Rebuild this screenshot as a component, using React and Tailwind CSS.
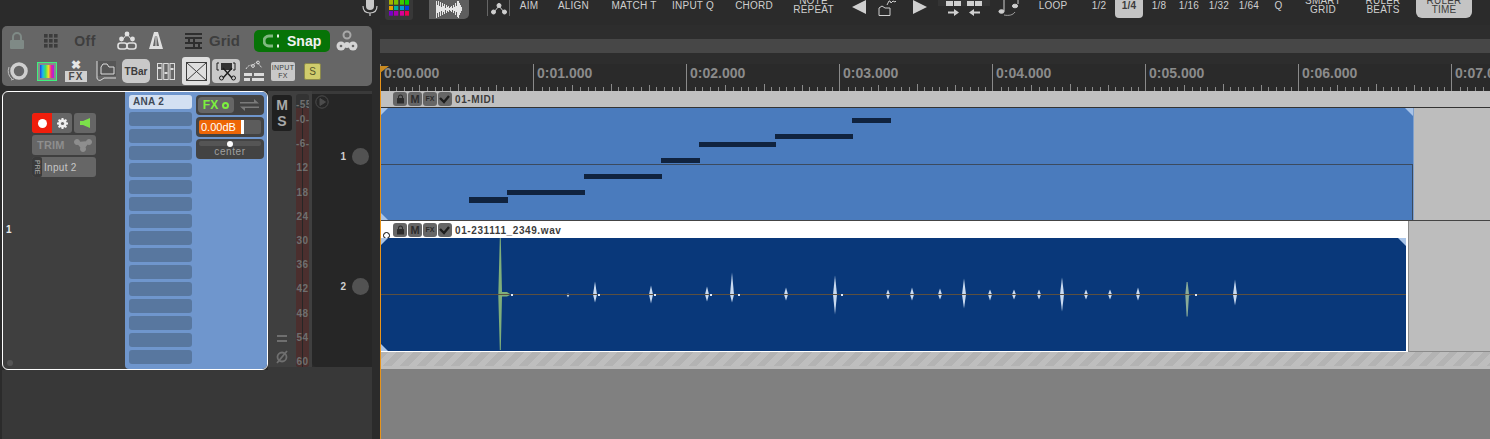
import React from "react";

const FONT = "font-['Liberation_Sans',Arial,sans-serif]";

// TOP TOOLBAR
function MicIcon() {
  return (
    <svg width="20" height="16" viewBox="0 0 20 16" fill="none">
      <rect x="6" y="-6" width="8" height="16" rx="4" fill="#c8c8c8" />
      <path d="M3 6c0 5 3 7 7 7s7-2 7-7M10 13v3" stroke="#c8c8c8" strokeWidth="1.2" />
    </svg>
  );
}

function PadGrid() {
  const colors = [
    "#a8b000", "#78c000", "#40c800", "#08d000",
    "#e8a000", "#00b0a0", "#0098d8", "#0040e0",
    "#7800c8", "#a800b0", "#d80098", "#f00050",
  ];
  return (
    <div className="w-[28px] h-[20px] bg-[#383838] rounded-b-[3px] grid grid-cols-4 gap-px px-[4px] pb-[4px]">
      {colors.map((c, i) => (
        <svg key={i} className="w-full h-full" viewBox="0 0 5 4" preserveAspectRatio="none">
          <rect width="5" height="4" fill={c} />
        </svg>
      ))}
    </div>
  );
}

const waveAmps = [9, 4, 8, 3, 7, 2, 6, 3, 5, 1, 4, 2, 3, 1, 2, 3, 1, 4, 2, 6, 3, 8, 9, 6, 4, 2];

function WaveButton() {
  return (
    <div className="w-[40px] h-[19px] bg-[#5e5e5e] rounded-br-[5px] flex items-center justify-center">
      <svg width="28" height="18" viewBox="0 0 28 18" stroke="#e6e6e6">
        {waveAmps.map((a, i) => (
          <line key={i} x1={i + 1.5} x2={i + 1.5} y1={8 - a} y2={8 + a} />
        ))}
      </svg>
    </div>
  );
}

function NodeIcon() {
  return (
    <div className="w-[23px] h-[16px] border-x border-[#666] flex items-center justify-center">
      <svg width="16" height="13" viewBox="0 0 16 13" fill="#d0d0d0" stroke="#d0d0d0">
        <path d="M3 10l5-6 5 6" fill="none" strokeWidth="1" />
        <circle cx="8" cy="3.5" r="2" />
        <circle cx="2.5" cy="10" r="2" />
        <circle cx="13.5" cy="10" r="2" />
      </svg>
    </div>
  );
}

function Label({ w, children, two, active }) {
  return (
    <div
      className={`shrink-0 text-center text-[10px] tracking-[0.2px] ${w} ${
        two ? "leading-[9px] -mt-[4px]" : "leading-[11px]"
      } ${active ? "text-[#3c3c3c]" : "text-[#cfcfcf]"}`}
    >
      {children}
    </div>
  );
}

function ArrowKeys() {
  return (
    <div className="ml-[16px] shrink-0 flex items-start">
      <svg width="14" height="15" viewBox="0 0 14 15" fill="#cfcfcf">
        <path d="M14 0v14L0 7z" />
      </svg>
      <svg width="24" height="17" viewBox="0 0 24 17" fill="none" stroke="#cfcfcf" className="ml-[12px]">
        <path d="M1 15.5V8l3-2 3 2h5v7.5zM9 5l2-4h1l1 2 2-2 2 1 1-1" strokeWidth="1" />
      </svg>
      <svg width="14" height="15" viewBox="0 0 14 15" fill="#cfcfcf" className="ml-[11px]">
        <path d="M0 0v14l14-7z" />
      </svg>
    </div>
  );
}

function SplitIcons() {
  return (
    <div className="ml-[11px] shrink-0 w-[52px] h-[16px] flex gap-[6px] pl-[8px] bg-[linear-gradient(#343434_0_6px,transparent_6px)]">
      {[
        "M2 11.500h6V9l5 3.500-5 3.500v-2.500H2z",
        "M13 11.500H7V9l-5 3.500 5 3.500v-2.500h6z",
      ].map((d) => (
        <svg key={d} width="15" height="16" viewBox="0 0 15 16" fill="#d0d0d0">
          <rect x="0" y="1" width="7" height="5" />
          <rect x="8" y="1" width="7" height="5" />
          <path d={d} />
        </svg>
      ))}
    </div>
  );
}

function NotesIcon() {
  return (
    <svg width="22" height="16" viewBox="0 0 22 16" fill="none" stroke="#cfcfcf" className="ml-[8px] shrink-0">
      <path d="M6 0v11M20 0v4" strokeWidth="1" />
      <ellipse cx="3.5" cy="11.5" rx="2.6" ry="1.8" fill="#cfcfcf" />
      <ellipse cx="17" cy="6" rx="2.6" ry="1.8" fill="#cfcfcf" />
      <path d="M6 15c5 1 9 0 11-3" strokeWidth=".7" />
    </svg>
  );
}

function TopBar() {
  return (
    <div className="h-[25px] shrink-0 bg-[#2b2b2b] flex items-start pl-[360px] overflow-hidden">
      <div className="w-[25px] shrink-0"><MicIcon /></div>
      <div className="w-[44px] shrink-0"><PadGrid /></div>
      <div className="w-[58px] shrink-0"><WaveButton /></div>
      <div className="w-[23px] shrink-0"><NodeIcon /></div>
      <Label w="w-[38px]">AIM</Label>
      <Label w="w-[51px]">ALIGN</Label>
      <Label w="w-[70px]">MATCH T</Label>
      <Label w="w-[48px]">INPUT Q</Label>
      <Label w="w-[74px]">CHORD</Label>
      <Label w="w-[45px]" two>
        NOTE<br />REPEAT
      </Label>
      <ArrowKeys />
      <SplitIcons />
      <NotesIcon />
      <Label w="w-[66px]">LOOP</Label>
      <Label w="w-[26px]">1/2</Label>
      <div className="w-[28px] h-[18px] ml-[3px] shrink-0 bg-[#c4c4c4] rounded-b-[4px]">
        <Label w="w-[28px]" active>
          <b>1/4</b>
        </Label>
      </div>
      <Label w="w-[32px]">1/8</Label>
      <Label w="w-[28px]">1/16</Label>
      <Label w="w-[32px]">1/32</Label>
      <Label w="w-[28px]">1/64</Label>
      <Label w="w-[31px]">Q</Label>
      <Label w="w-[58px]" two>
        SMART<br />GRID
      </Label>
      <Label w="w-[62px]" two>
        RULER<br />BEATS
      </Label>
      <div className="w-[56px] h-[18px] ml-[2px] shrink-0 bg-[#c4c4c4] rounded-b-[6px]">
        <Label w="w-[56px]" two active>
          RULER<br />TIME
        </Label>
      </div>
    </div>
  );
}

// LEFT ACTION PANEL
function Cell({ x, w, children, className = "" }) {
  return (
    <div className={`shrink-0 flex items-center justify-center ${w} ${x} ${className}`}>
      {children}
    </div>
  );
}

function Dots() {
  return (
    <svg width="14" height="14" viewBox="0 0 14 14" fill="#3c3c3c">
      {[0, 5, 10].map((y) =>
        [0, 5, 10].map((x) => <rect key={`${x}-${y}`} x={x} y={y} width="3.6" height="3.6" />)
      )}
    </svg>
  );
}

function ActionPanel() {
  return (
    <div className="w-[370px] h-[60px] mt-px bg-[#666666] rounded-[5px] flex flex-col overflow-hidden">
      {/* ROW 1 */}
      <div className="h-[30px] flex items-center">
        <Cell w="w-[30px]">
          <svg width="16" height="18" viewBox="0 0 16 18" fill="#7f8a86">
            <path d="M3 8V5a5 5 0 0 1 10 0v3h-2V5a3 3 0 0 0-6 0v3z" />
            <rect x="1" y="8" width="14" height="9" rx="1" />
          </svg>
        </Cell>
        <Cell w="w-[14px]" x="ml-[12px]"><Dots /></Cell>
        <Cell w="w-[32px]" x="ml-[11px]">
          <span className="text-[14px] font-bold text-[#3e3e3e] tracking-[0.5px]">Off</span>
        </Cell>
        <Cell w="w-[20px]" x="ml-[16px]">
          <svg width="20" height="20" viewBox="0 0 20 20" fill="none" stroke="#e0e0e0" strokeWidth="1.6">
            <path d="M6 8l4-5 4 5" strokeWidth="1" />
            <circle cx="10" cy="3" r="1.6" fill="#e0e0e0" />
            <circle cx="4.5" cy="8" r="1.6" fill="#e0e0e0" />
            <circle cx="15.5" cy="8" r="1.6" fill="#e0e0e0" />
            <rect x="1" y="12" width="9" height="6" rx="2.5" />
            <rect x="10" y="12" width="9" height="6" rx="2.5" />
          </svg>
        </Cell>
        <Cell w="w-[14px]" x="ml-[12px]">
          <svg width="14" height="18" viewBox="0 0 14 18" fill="#e0e0e0">
            <path d="M5 0h4l5 17H0zM6 4l-2 10h6L8 4z" fillRule="evenodd" />
            <path d="M6.5 3h1v11h-1z" />
          </svg>
        </Cell>
        <Cell w="w-[18px]" x="ml-[21px]">
          <svg width="17" height="16" viewBox="0 0 17 16" fill="#2e2e2e">
            <rect y="0" width="17" height="2" />
            <rect y="4" width="17" height="2" />
            <rect y="9" width="17" height="2" />
            <rect y="14" width="17" height="2" />
            <rect x="3" y="4" width="2" height="7" />
            <rect x="8" y="4" width="2" height="12" />
            <rect x="13" y="9" width="2" height="7" />
          </svg>
        </Cell>
        <Cell w="w-[33px]" x="ml-[6px]">
          <span className="text-[15px] font-bold text-[#3e3e3e]">Grid</span>
        </Cell>
        <div className="ml-[13px] shrink-0 w-[76px] h-[22px] bg-[#077307] rounded-[5px] flex items-center pl-[9px] gap-[7px]">
          <svg width="17" height="14" viewBox="0 0 17 14" fill="none" stroke="#7fb87f" strokeWidth="3">
            <path d="M10 2H6a5 5 0 0 0 0 10h4" />
            <path d="M14 2h2M14 12h2" stroke="#e8f0e8" />
          </svg>
          <span className="text-[14px] font-bold text-[#f2f2f2]">Snap</span>
        </div>
        <Cell w="w-[22px]" x="ml-[6px]">
          <svg width="22" height="22" viewBox="0 0 22 22" fill="#d4d4d4">
            <circle cx="11" cy="5" r="3.5" fill="none" stroke="#a8a8a8" strokeWidth="2" />
            <circle cx="5" cy="16" r="4.5" />
            <circle cx="17" cy="16" r="4.5" />
            <circle cx="11" cy="15" r="3" />
            <circle cx="5" cy="16" r="1.3" fill="#666" />
            <circle cx="17" cy="16" r="1.3" fill="#666" />
          </svg>
        </Cell>
      </div>
      {/* ROW 2 */}
      <div className="h-[30px] flex items-center pl-[4px]">
        <Cell w="w-[24px]">
          <svg width="24" height="24" viewBox="0 0 24 24" fill="none">
            <circle cx="13" cy="12" r="7" stroke="#cfcfcf" strokeWidth="3.6" />
            <path d="M3 8a11 11 0 0 0 3 12M5 21l3-1" stroke="#bdbdbd" strokeWidth="1" />
          </svg>
        </Cell>
        <div className="ml-[7px] w-[20px] h-[19px] border border-[#3df27d] flex items-center justify-center shrink-0">
          <div className="w-[14px] h-[13px] bg-[linear-gradient(90deg,#2040e0,#18b8f0,#40e060,#f0e020,#f02090,#a020f0)] outline-[2px] outline-[#8a8a8a]" />
        </div>
        <Cell w="w-[22px]" x="ml-[8px]" className="flex-col">
          <span className="text-[#e6e6e6] text-[12px] leading-[10px] font-bold">✖</span>
          <span className="w-[22px] h-[11px] bg-[#d0d0d0] text-[#4a4a4a] text-[10px] leading-[11px] text-center font-bold tracking-[1px] mt-px">FX</span>
        </Cell>
        <Cell w="w-[20px]" x="ml-[9px]">
          <svg width="20" height="22" viewBox="0 0 20 22" fill="none" stroke="#dcdcdc" strokeWidth="1">
            <rect x="1" y="1" width="19" height="15" fill="#565656" stroke="none" />
            <path d="M1 1v17c0 2 3 3 4 2l3-2h12" />
            <path d="M5 14V7l2-3h4l2 3h5v7z" />
          </svg>
        </Cell>
        <div className="ml-[6px] shrink-0 w-[28px] h-[24px] bg-[#c9c9c9] rounded-[5px] flex items-center justify-center text-[10px] font-bold text-[#3c3c3c]">
          TBar
        </div>
        <Cell w="w-[18px]" x="ml-[7px]">
          <svg width="18" height="17" viewBox="0 0 18 17" fill="none" stroke="#dcdcdc">
            <rect x=".5" y=".5" width="4.5" height="16" />
            <rect x="6.7" y=".5" width="4.5" height="16" />
            <rect x="13" y=".5" width="4.5" height="16" />
            <path d="M1 5h3.500M7.500 10h3M13.500 6h3" strokeWidth="2" />
          </svg>
        </Cell>
        <div className="ml-[7px] shrink-0 w-[28px] h-[28px] bg-[#dfdfdf] rounded-[3px] flex items-center justify-center">
          <svg width="21" height="19" viewBox="0 0 21 19" fill="none" stroke="#3e3e3e">
            <rect x=".5" y=".5" width="20" height="18" />
            <path d="M.5.500l20 18M20.500.500l-20 18" />
          </svg>
        </div>
        <div className="ml-[2px] shrink-0 w-[28px] h-[24px] bg-[#c9c9c9] rounded-[4px] flex items-center justify-center">
          <svg width="20" height="20" viewBox="0 0 20 20" fill="none" stroke="#1e1e1e">
            <rect x="5" y="2" width="11" height="7" fill="#333" stroke="none" />
            <path d="M1 2h2M17 2h2M1 9h2M17 9h2M1 2v7M19 2v7" />
            <path d="M16 7L7 17M7 7l9 10" strokeWidth="1.4" />
            <circle cx="5.500" cy="17" r="2" />
            <circle cx="17.500" cy="17" r="2" />
          </svg>
        </div>
        <Cell w="w-[22px]" x="ml-[3px]">
          <svg width="22" height="22" viewBox="0 0 22 22" fill="none" stroke="#dcdcdc">
            <path d="M3 9c2-4 5-4 7-4l4-3 5 6" strokeDasharray="2 1" />
            <circle cx="10" cy="6" r="1.4" />
            <circle cx="15" cy="2.500" r="1.4" />
            <path d="M1 13h8v3H1zM11 13h10v3H11zM1 18h6v3H1zM9 18h12v3H9z" fill="#dcdcdc" stroke="none" />
          </svg>
        </Cell>
        <div className="ml-[6px] shrink-0 w-[24px] h-[19px] bg-[#c9c9c9] rounded-[2px] text-[7px] leading-[8px] text-center text-[#3c3c3c] pt-[2px] tracking-[0.3px]">
          INPUT<br />FX
        </div>
        <div className="ml-[9px] shrink-0 w-[17px] h-[17px] bg-[#d0cc6c] border border-[#8c8a4c] rounded-[2px] text-[10px] leading-[15px] text-center text-[#55532a]">
          S
        </div>
      </div>
    </div>
  );
}

// TRACK CONTROL PANEL
function FxSlots() {
  const slots = Array.from({ length: 15 }, (_, i) => i);
  return (
    <div className="w-[63px] flex flex-col gap-[3px]">
      <div className="h-[14px] rounded-[3px] bg-[#d3e0f2] text-[10px] leading-[14px] font-bold text-[#404a58] pl-[4px] tracking-[0.3px]">
        ANA 2
      </div>
      {slots.map((i) => (
        <div key={i} className="h-[14px] rounded-[3px] bg-[#58779f]" />
      ))}
    </div>
  );
}

function MixerControls() {
  return (
    <div className="w-[68px] flex flex-col gap-[2px]">
      <div className="h-[20px] rounded-[4px] bg-[#434343] flex items-center pl-[2px] gap-[6px]">
        <div className="w-[36px] h-[16px] bg-[#666666] rounded-[4px] flex items-center justify-center gap-[4px]">
          <span className="text-[12px] font-bold text-[#7cf03e] leading-none">FX</span>
          <span className="w-[7px] h-[7px] rounded-full border-2 border-[#7cf03e]" />
        </div>
        <svg width="19" height="12" viewBox="0 0 19 12" fill="#7a7a7a">
          <path d="M0 3h14V0l5 4.500H0zM19 7.500H0l5 4.500V9h14z" />
        </svg>
      </div>
      <div className="h-[20px] rounded-[4px] bg-[#434343] flex items-center px-[3px]">
        <div className="w-[62px] h-[14px] bg-[#5c5c5c] rounded-[2px] flex overflow-hidden">
          <div className="w-[45px] bg-[#ee6606] border-r-[3px] border-white text-[11px] leading-[14px] text-white pl-[2px]">
            0.00dB
          </div>
        </div>
      </div>
      <div className="h-[20px] rounded-[4px] bg-[#434343] flex flex-col items-center pt-[2px]">
        <div className="w-[62px] h-[5px] rounded-[2px] bg-[#555555] flex items-center justify-center">
          <span className="w-[6px] h-[6px] rounded-full bg-white" />
        </div>
        <span className="text-[10px] leading-[12px] text-[#a0a0a0] tracking-[0.6px]">center</span>
      </div>
    </div>
  );
}

function GearIcon() {
  return (
    <svg width="11" height="11" viewBox="0 0 11 11" fill="#f0f0f0">
      <circle cx="5.500" cy="5.500" r="3.200" fill="none" stroke="#f0f0f0" strokeWidth="2" />
      {[0, 45, 90, 135].map((a) => (
        <rect key={a} x="4.500" y="0" width="2" height="11" transform={`rotate(${a} 5.500 5.500)`} />
      ))}
      <circle cx="5.500" cy="5.500" r="1.600" fill="#666666" />
    </svg>
  );
}

function TrackPanel() {
  return (
    <div className="relative w-[266px] h-[279px] shrink-0 border border-white rounded-[6px] bg-[#3f3f3f] overflow-hidden flex">
      <div className="w-[122px] shrink-0 flex flex-col pt-[21px] pl-[29px]">
        <div className="flex gap-[2px]">
          <div className="w-[40px] h-[20px] rounded-[3px] bg-[#666666] flex overflow-hidden">
            <div className="w-[20px] bg-[#f01e0c] flex items-center justify-center">
              <span className="w-[9px] h-[9px] rounded-full bg-white" />
            </div>
            <div className="flex-1 flex items-center justify-center">
              <GearIcon />
            </div>
          </div>
          <div className="w-[22px] h-[20px] rounded-[3px] bg-[#666666] flex items-center justify-center">
            <svg width="10" height="10" viewBox="0 0 10 10" fill="#7ce04a">
              <path d="M0 3h3l7-3v10L3 7H0z" />
            </svg>
          </div>
        </div>
        <div className="w-[64px] h-[20px] mt-[2px] rounded-[3px] bg-[#666666] flex items-center pl-[5px] justify-between pr-[4px]">
          <span className="text-[11px] font-bold text-[#8e8e8e] tracking-[0.2px]">TRIM</span>
          <svg width="18" height="13" viewBox="0 0 18 13" fill="#8e8e8e" stroke="#8e8e8e">
            <path d="M3 3l6 7 6-8" strokeWidth="2" />
            <circle cx="3" cy="3" r="2.500" />
            <circle cx="9" cy="10" r="2.500" />
            <circle cx="15" cy="3" r="2.500" />
          </svg>
        </div>
        <div className="w-[64px] h-[20px] mt-[2px] rounded-[3px] bg-[#666666] flex items-center overflow-hidden">
          <div className="w-[10px] h-[20px] bg-[#3a3a3a] rounded-r-[2px] flex items-center justify-center">
            <span className="[writing-mode:vertical-rl] text-[7px] leading-none text-[#b0b0b0]">PRE</span>
          </div>
          <span className="ml-[2px] text-[10px] text-[#c6c6c6] tracking-[0.3px]">Input 2</span>
        </div>
        <div className="-ml-[26px] mt-[47px] text-[10px] font-bold text-[#e8e8e8] leading-[12px]">1</div>
      </div>
      <div className="flex-1 bg-[#6f96cd] rounded-bl-[4px] flex gap-[4px] pt-[3px] pl-[4px]">
        <FxSlots />
        <MixerControls />
      </div>
      <span className="absolute left-[4px] bottom-[3px] w-[6px] h-[6px] rounded-full bg-[#555555]" />
    </div>
  );
}

const meterMarks = ["-0-", "-6-", "12", "18", "24", "30", "36", "42", "48", "54", "60"];

function Meter() {
  return (
    <div className="relative w-[13px] h-[273px] mt-[3px] rounded-[3px] bg-[#333333] overflow-hidden">
      <div className="absolute left-0 right-0 top-[14px] bottom-0 bg-[#4b2f2e]" />
      <div className="absolute left-[6px] top-[14px] bottom-0 w-px bg-[#262626]" />
      <div className="relative text-center text-[10px] font-bold text-[#6f6f6f] tracking-[0.4px] whitespace-nowrap">
        <div className="h-[14px] leading-[22px]">-55</div>
        {meterMarks.map((m) => (
          <div key={m} className="h-[24.2px] leading-[24.2px]">{m}</div>
        ))}
      </div>
    </div>
  );
}

function TrackRows() {
  return (
    <div className="w-[104px] h-[279px] shrink-0 flex flex-col">
      <div className="h-[276px] flex">
        <div className="w-[44px] bg-[#3f3f3f] flex pl-[4px] gap-[4px]">
          <div className="w-[20px] flex flex-col justify-between items-center pb-[3px] pt-[4px]">
            <div className="w-[20px] h-[36px] bg-[#202020] rounded-[3px] text-[14px] font-bold text-[#a8a8a8] leading-[16px] text-center pt-[2px]">
              M<br />S
            </div>
            <div className="flex flex-col items-center">
              <svg width="12" height="7" viewBox="0 0 12 7" fill="#6f6f6f" className="mb-[8px]">
                <path d="M1 0h10v2H1zM1 5h10v2H1z" />
              </svg>
              <svg width="12" height="14" viewBox="0 0 12 14" fill="none" stroke="#6f6f6f" strokeWidth="1.800">
                <circle cx="6" cy="7" r="4.500" />
                <path d="M1 13L11 1" />
              </svg>
            </div>
          </div>
          <Meter />
        </div>
        <div className="flex-1 bg-[#262626] border-t-[3px] border-[#3a3a3a] rounded-bl-[5px] flex flex-col">
          <svg width="14" height="14" viewBox="0 0 14 14" fill="none" stroke="#4c4c4c" className="ml-[3px] mt-px shrink-0">
            <circle cx="7" cy="7" r="6.200" />
            <path d="M5 3.500v7L10.500 7z" fill="#4c4c4c" />
          </svg>
          <div className="h-[54px] flex items-center justify-end pr-[3px] gap-[6px] mt-[20px]">
            <span className="text-[10px] font-bold text-[#d0d0d0]">1</span>
            <span className="w-[17px] h-[17px] rounded-full bg-[#525252]" />
          </div>
          <div className="h-[54px] flex items-center justify-end pr-[3px] gap-[6px] mt-[76px]">
            <span className="text-[10px] font-bold text-[#d0d0d0]">2</span>
            <span className="w-[17px] h-[17px] rounded-full bg-[#525252]" />
          </div>
        </div>
      </div>
      <div className="flex-1 bg-[#383838]" />
    </div>
  );
}

function LeftColumn() {
  return (
    <div className="w-[380px] shrink-0 flex flex-col pl-[2px]">
      <ActionPanel />
      <div className="h-[5px] shrink-0" />
      <div className="flex">
        <TrackPanel />
        <TrackRows />
      </div>
      <div className="w-[370px] flex-1 bg-[#383838]" />
    </div>
  );
}

// ARRANGE VIEW
function RulerTicks() {
  const ticks = Array.from({ length: 20 }, (_, i) => i);
  return (
    <svg width="153" height="9" viewBox="0 0 153 9" className="block">
      {ticks.slice(1).map((i) => {
        const x = Math.round(i * 7.65) + 0.5;
        const h = i === 10 ? 7 : i % 5 === 0 ? 6 : 4;
        return <line key={i} x1={x} x2={x} y1={9 - h} y2="9" stroke="#8a8a8a" />;
      })}
    </svg>
  );
}

function Ruler() {
  const labels = ["0:00.000", "0:01.000", "0:02.000", "0:03.000", "0:04.000", "0:05.000", "0:06.000", "0:07.000"];
  return (
    <div className="h-[27px] shrink-0 bg-[#2a2a2a] flex overflow-hidden">
      {labels.map((l) => (
        <div key={l} className="w-[153px] shrink-0 border-l border-[#8a8a8a] flex flex-col justify-between">
          <span className="text-[14px] leading-[18px] font-bold text-[#8b8b8b] pl-[3px]">{l}</span>
          <RulerTicks />
        </div>
      ))}
    </div>
  );
}

function TrackButtons() {
  const box = "w-[14px] h-[14px] rounded-[3px] bg-[#666666] flex items-center justify-center text-[#2c2c2c] shrink-0";
  return (
    <div className="flex gap-px ml-[13px] mr-[3px]">
      <div className={box}>
        <svg width="9" height="10" viewBox="0 0 9 10" fill="#2c2c2c">
          <path d="M2 4V3a2.500 2.500 0 0 1 5 0v1H6V3a1.500 1.500 0 0 0-3 0v1z" />
          <rect x="1" y="4" width="7" height="5.500" rx=".5" />
        </svg>
      </div>
      <div className={`${box} text-[11px] font-bold`}>M</div>
      <div className={`${box} text-[7px] font-bold`}>FX</div>
      <div className={box}>
        <svg width="12" height="9" viewBox="0 0 12 9" fill="none" stroke="#1e1e1e" strokeWidth="2.400">
          <path d="M1 3l4 4 5-6" />
        </svg>
      </div>
    </div>
  );
}

function Corner({ className, d }) {
  return (
    <svg width="8" height="8" viewBox="0 0 8 8" className={`absolute ${className}`}>
      <path d={d} fill="#a9c4e8" />
    </svg>
  );
}

const midiNotes = [
  [469, 197, 39, 6],
  [507, 190, 78, 5],
  [584, 174, 78, 5],
  [661, 158, 39, 5],
  [699, 142, 77, 5],
  [775, 134, 78, 5],
  [852, 118, 39, 5],
];

function MidiTrack() {
  return (
    <>
      <div className="h-[16px] shrink-0 bg-[#c0c0c0] flex items-center">
        <TrackButtons />
        <span className="text-[10px] font-bold text-[#3c3c3c] tracking-[0.6px]">01-MIDI</span>
      </div>
      <div className="h-[113px] shrink-0 flex border-t border-[#333333]">
        <div className="relative w-[1034px] shrink-0 bg-[#4a7bbd] border-r border-[#7fa0cc]">
          <Corner className="top-0 left-0" d="M0 0h8L0 8z" />
          <Corner className="top-0 right-0" d="M0 0h8v8z" />
          <Corner className="bottom-0 left-0" d="M0 0l8 8H0z" />
          <div className="absolute left-0 right-0 top-[56px] bottom-0 border-t border-r border-[#3b4a5e]" />
          {/* notes sit on a piano-roll canvas */}
          {midiNotes.map(([x, y, w, h]) => (
            <svg
              key={x}
              width={w}
              height={h}
              className="absolute"
              style={{ left: x - 380, top: y - 108 }}
            >
              <rect width={w} height={h} fill="#10233f" />
            </svg>
          ))}
        </div>
        <div className="flex-1 bg-[#bdbdbd]" />
      </div>
    </>
  );
}

const spikes = [
  [568, 1, 3, 3],
  [595, 13, 8, 4],
  [651, 9, 9, 4],
  [707, 8, 7, 4],
  [732, 22, 8, 4],
  [786, 7, 6, 4],
  [835, 19, 20, 4],
  [888, 5, 5, 4],
  [912, 7, 6, 4],
  [940, 6, 5, 4],
  [964, 16, 14, 4],
  [990, 5, 6, 4],
  [1014, 5, 5, 4],
  [1039, 5, 5, 4],
  [1062, 17, 17, 4],
  [1086, 5, 5, 4],
  [1110, 5, 5, 4],
  [1138, 7, 6, 4],
  [1235, 15, 11, 4],
];

// little specks right after the louder hits
const specks = [511, 598, 654, 710, 738, 841, 1195];

function AudioTrack() {
  return (
    <div className="h-[131px] shrink-0 flex">
      <div className="w-[1028px] shrink-0 flex flex-col">
        <div className="relative h-[17px] shrink-0 bg-white flex items-center pt-px">
          <TrackButtons />
          <span className="text-[10px] font-bold text-[#3c3c3c] tracking-[0.6px]">01-231111_2349.wav</span>
          <span className="absolute left-[3px] bottom-[-1px] w-[7px] h-[7px] rounded-full border-[1.5px] border-black bg-white" />
        </div>
        <div className="relative h-[113px] shrink-0 bg-[#09387a] border-r-[2px] border-white overflow-hidden">
          <Corner className="top-0 left-0" d="M0 0h8L0 8z" />
          <Corner className="top-0 right-0" d="M0 0h8v8z" />
          <Corner className="bottom-0 left-0" d="M0 0l8 8H0z" />
          <svg width="1026" height="113" viewBox="380 238 1026 113" className="block">
            <path d="M498.300 294.500L499.800 238h1L502 292h5l4 2.500-4 2h-5L500.800 350h-1L498.300 296z" fill="#7fae7a" />
            <path d="M1185.300 294.500L1186.600 282h1L1189 294l4 .5-4 1-1.400 21h-1z" fill="#89ab98" />
            {spikes.map(([x, up, down, w]) => (
              <path
                key={x}
                d={`M${x - w / 2} 294.500L${x} ${294.5 - up}L${x + w / 2} 294.500L${x} ${294.5 + down}z`}
                fill="#c9daf0"
              />
            ))}
            <rect x="380" y="294" width="1026" height="1" fill="#5c5040" />
            {specks.map((x) => (
              <rect key={x} x={x} y="294" width="2" height="2" fill="#dfe8f4" />
            ))}
          </svg>
        </div>
        <div className="h-px bg-white" />
      </div>
      <div className="flex-1 bg-[#bdbdbd] border-l border-b border-[#8a8a8a]" />
    </div>
  );
}

function Arrange() {
  return (
    <div className="relative flex-1 flex flex-col overflow-hidden">
      <div className="h-[14px] shrink-0 bg-[#2d2d2d]" />
      <div className="h-[14px] shrink-0 bg-[#474747]" />
      <div className="h-[11px] shrink-0 bg-[#2d2d2d]" />
      <Ruler />
      <MidiTrack />
      <div className="h-px shrink-0 bg-[#444444]" />
      <AudioTrack />
      <div className="h-[14px] shrink-0 bg-[repeating-linear-gradient(135deg,#b3b3b3_0_6px,#bebebe_6px_12px)]" />
      <div className="h-[3px] shrink-0 bg-[#bdbdbd]" />
      <div className="flex-1 bg-[#808080]" />
      {/* PLAYHEAD */}
      <div className="absolute left-0 top-[41px] bottom-0 w-px bg-[#e8941a]" />
      <svg width="10" height="8" viewBox="0 0 10 8" className="absolute left-0 top-[41px]">
        <path d="M0 0h9L0 7z" fill="#c98a20" />
      </svg>
    </div>
  );
}

export default function App() {
  return (
    <div className={`${FONT} w-[1490px] h-[439px] overflow-hidden bg-[#2b2b2b] flex flex-col`}>
      <TopBar />
      <div className="flex-1 flex min-h-0">
        <LeftColumn />
        <Arrange />
      </div>
    </div>
  );
}
